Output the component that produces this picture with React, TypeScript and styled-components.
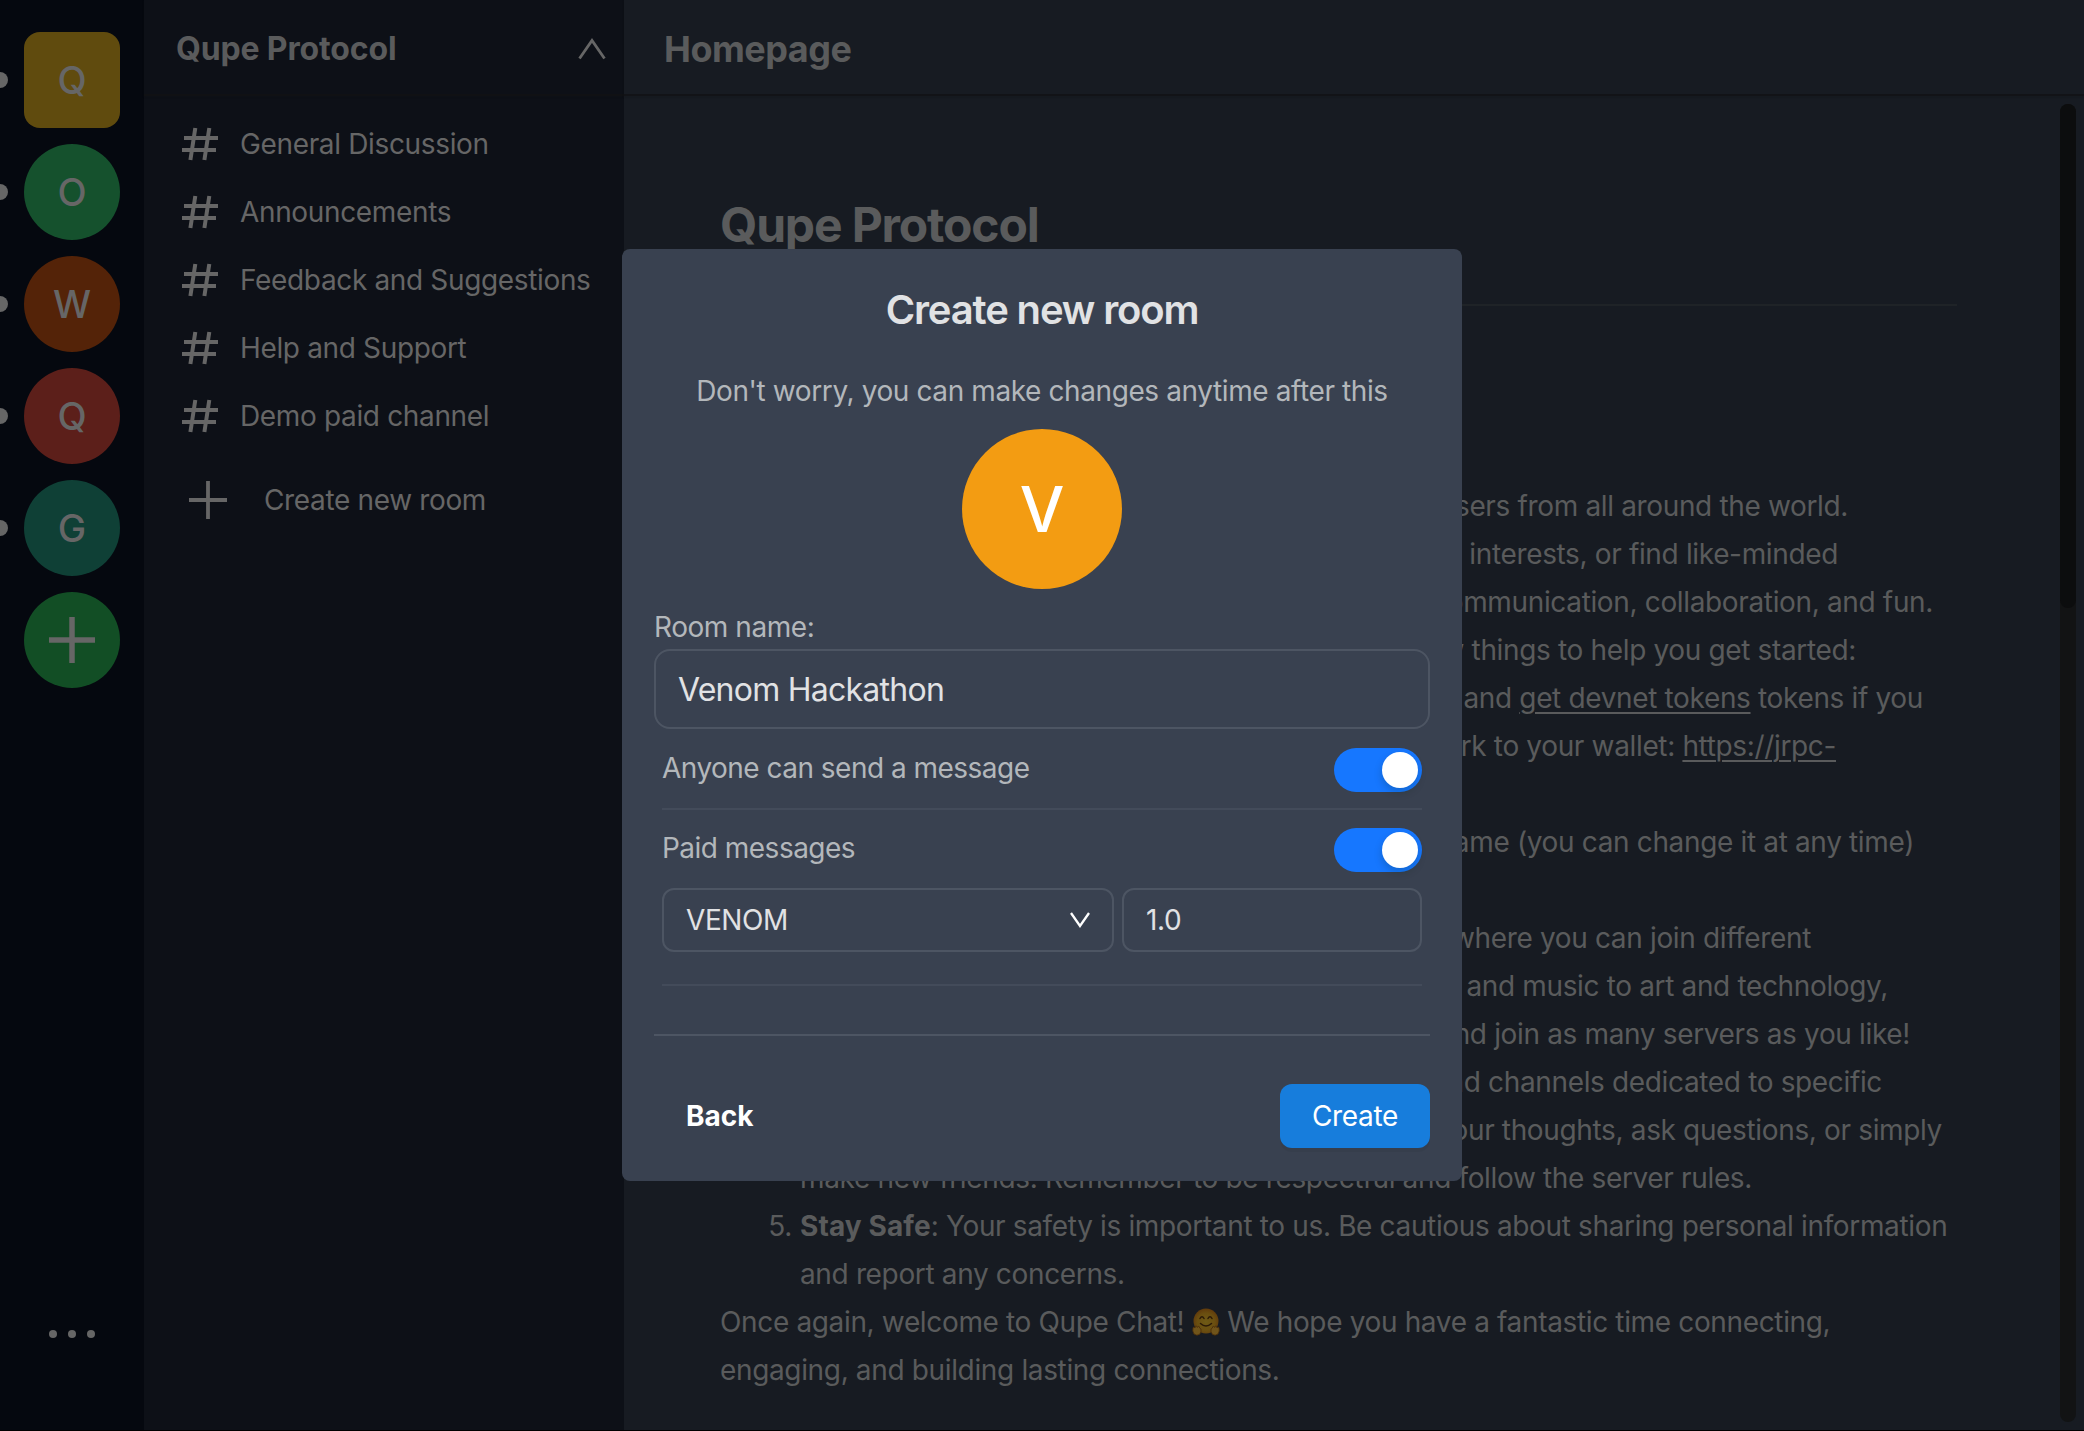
import React from "react";
import styled, { createGlobalStyle } from "styled-components";

const Global = createGlobalStyle`
  *, *::before, *::after { box-sizing: border-box; }
  body { margin: 0; background: #171b22; font-family: Inter, "Liberation Sans", sans-serif; font-size: 28px; letter-spacing: -0.35px; }
  h1, h2, p, ol { margin: 0; padding: 0; }
  button, input { font-family: inherit; }
`;

const Shell = styled.div`
  display: grid;
  grid-template-columns: 144px 480px 1fr;
  height: 1431px;
  overflow: hidden;
  position: relative;
  border-bottom: 1px solid #000;
`;

const Rail = styled.nav`
  background: #05080f;
  padding: 32px 0 92px;
  display: flex;
  flex-direction: column;
  gap: 16px;
`;

const ServerRow = styled.div`
  display: flex;
  align-items: center;
  height: 96px;
`;

const Unread = styled.span<{ $shown: boolean }>`
  width: 8px;
  height: 16px;
  margin-right: 16px;
  border-radius: 0 8px 8px 0;
  background: ${(p) => (p.$shown ? "#666666" : "transparent")};
`;

const Avatar = styled.div<{ $bg: string; $square?: boolean }>`
  width: 96px;
  height: 96px;
  border-radius: ${(p) => (p.$square ? "16px" : "50%")};
  background: ${(p) => p.$bg};
  color: #666666;
  font-size: 38px;
  font-weight: 500;
  letter-spacing: 0;
  display: flex;
  align-items: center;
  justify-content: center;
`;

const Dots = styled.div`
  margin-top: auto;
  display: flex;
  justify-content: center;
  gap: 11px;
  height: 8px;
  span { width: 8px; height: 8px; border-radius: 50%; background: #666; }
`;

const Sidebar = styled.aside`
  background: #0d1017;
`;

const Bar = styled.header<{ $pad: string }>`
  height: 96px;
  padding: ${(p) => p.$pad};
  display: flex;
  align-items: center;
  justify-content: space-between;
  border-bottom: 2px solid rgba(17, 18, 20, 0.75);
  box-shadow: 0 1px 2px rgba(17, 19, 20, 0.3);
`;

const BarTitle = styled.h2<{ $size: number; $track: number }>`
  font-size: ${(p) => p.$size}px;
  letter-spacing: ${(p) => p.$track}px;
  font-weight: 700;
  color: #5a5b5c;
`;

const Rooms = styled.div`
  padding: 14px 0 0 36px;
  color: #666666;
`;

const Room = styled.div`
  height: 68px;
  display: flex;
  align-items: center;
  gap: 20px;
  white-space: nowrap;
`;

const NewRoom = styled(Room)`
  margin-top: 16px;
  padding-left: 9px;
  gap: 37px;
`;

const Main = styled.main`
  background: #171b22;
  min-width: 0;
  display: flex;
  flex-direction: column;
`;

const Scroll = styled.div`
  flex: 1;
  min-height: 0;
  display: flex;
  padding: 8px 8px 8px 96px;
`;

const Article = styled.article`
  width: 1237px;
  color: #5a5b5c;
  line-height: 48px;
  white-space: nowrap;
`;

const ArticleTitle = styled.h1`
  margin-top: 89px;
  height: 64px;
  line-height: 64px;
  font-size: 48px;
  font-weight: 700;
  letter-spacing: -1.15px;
`;

const Rule = styled.hr`
  margin: 47px 0 0;
  border: 0;
  height: 2px;
  background: #1f2327;
`;

const Intro = styled.div`
  margin-top: 176px;
`;

const Line = styled.div<{ $end: number }>`
  height: 48px;
  width: ${(p) => p.$end}px;
  display: flex;
  justify-content: flex-end;
  white-space: pre;
`;

const Link = styled.a`
  color: inherit;
  text-decoration: underline;
  text-underline-offset: 4px;
  text-decoration-thickness: 2px;
`;

const Steps = styled.ol`
  padding-left: 80px;
  list-style: none;
`;

const Step = styled.li`
  position: relative;
`;

const Marker = styled.span`
  position: absolute;
  right: calc(100% + 8px);
  top: 0;
`;

const Text = styled.div`
  height: 48px;
  white-space: pre;
`;

const Strong = styled.b`
  letter-spacing: 0.1px;
`;

const Emoji = styled.svg`
  width: 28px;
  height: 28px;
  vertical-align: -4px;
`;

const Track = styled.div`
  margin-left: auto;
  width: 16px;
  border-radius: 8px;
  background: #121314;
`;

const Thumb = styled.div`
  height: 504px;
  border-radius: 8px;
  background: #0c0d0e;
`;

const Dialog = styled.section`
  position: absolute;
  left: 622px;
  top: 249px;
  width: 840px;
  height: 932px;
  border-radius: 8px;
  background: #394150;
  padding: 0 32px;
  display: flex;
  flex-direction: column;
`;

const DialogTitle = styled.h2`
  margin-top: 35px;
  line-height: 52px;
  text-align: center;
  font-size: 40px;
  font-weight: 600;
  letter-spacing: -1.15px;
  color: #e1e2e4;
`;

const Hint = styled.p`
  margin-top: 33px;
  line-height: 44px;
  text-align: center;
  letter-spacing: -0.4px;
  color: #b3b7bb;
`;

const Picture = styled.div`
  margin: 16px auto 0;
  width: 160px;
  height: 160px;
  border-radius: 50%;
  background: #f39c12;
  color: #fff;
  font-size: 63px;
  font-weight: 500;
  letter-spacing: 0;
  display: flex;
  align-items: center;
  justify-content: center;
`;

const Label = styled.label`
  margin-top: 16px;
  line-height: 44px;
  letter-spacing: -0.45px;
  color: #b3b7bb;
`;

const Field = styled.div<{ $w?: number; $large?: boolean }>`
  width: ${(p) => (p.$w ? p.$w + "px" : "100%")};
  height: ${(p) => (p.$large ? 80 : 64)}px;
  padding: 0 22px;
  border: 2px solid #4d5563;
  border-radius: ${(p) => (p.$large ? 16 : 12)}px;
  font-size: ${(p) => (p.$large ? 32 : 28)}px;
  letter-spacing: ${(p) => (p.$large ? -0.75 : -0.4)}px;
  color: #e1e2e4;
  display: flex;
  align-items: center;
  justify-content: space-between;
`;

const Settings = styled.div`
  padding: 0 8px;
`;

const Setting = styled.div<{ $first?: boolean }>`
  height: ${(p) => (p.$first ? 79 : 78)}px;
  padding-top: ${(p) => (p.$first ? 19 : 18)}px;
  display: flex;
  align-items: flex-start;
  justify-content: space-between;
`;

const SettingName = styled.span`
  margin-top: -2px;
  line-height: 44px;
  letter-spacing: -0.52px;
  color: #b3b7bb;
`;

const Switch = styled.span`
  width: 88px;
  height: 44px;
  padding: 4px;
  border-radius: 22px;
  background: #1677ff;
  display: flex;
  justify-content: flex-end;
`;

const Knob = styled.span`
  width: 36px;
  height: 36px;
  border-radius: 50%;
  background: #fff;
  box-shadow: 0 4px 8px rgba(0, 35, 11, 0.2);
`;

const Divider = styled.div`
  height: 2px;
  background: #434b5a;
`;

const FooterDivider = styled(Divider)`
  margin-top: 48px;
  background: #4d5563;
`;

const Price = styled.div`
  display: flex;
  gap: 8px;
  margin-bottom: 32px;
`;

const Footer = styled.footer`
  margin-top: 48px;
  display: flex;
  align-items: center;
  justify-content: space-between;
`;

const Action = styled.button<{ $primary?: boolean }>`
  height: 64px;
  width: ${(p) => (p.$primary ? "150px" : "auto")};
  padding: 0 ${(p) => (p.$primary ? 0 : 32)}px;
  border: 0;
  border-radius: 12px;
  font-size: 28px;
  font-weight: ${(p) => (p.$primary ? 400 : 700)};
  letter-spacing: ${(p) => (p.$primary ? -0.35 : 0)}px;
  color: #fff;
  background: ${(p) => (p.$primary ? "#177ddc" : "transparent")};
  box-shadow: ${(p) => (p.$primary ? "0 4px 0 rgba(0, 0, 0, 0.045)" : "none")};
`;

const HashIcon = () => (
  <svg width="40" height="40" viewBox="0 0 40 40" fill="none" stroke="#666" strokeWidth="4">
    <path d="M15.3 4 10.4 36M29.3 4 24.4 36M4 14H38M2 26H36" />
  </svg>
);

const PlusIcon = ({ size, weight }: { size: number; weight: number }) => (
  <svg width={size} height={size} viewBox={`0 0 ${size} ${size}`} stroke="#666" strokeWidth={weight}>
    <path d={`M${size / 2} 0V${size}M0 ${size / 2}H${size}`} />
  </svg>
);

const HugEmoji = () => (
  <Emoji viewBox="0 0 28 28">
    <defs>
      <radialGradient id="hug-face" cx="50%" cy="55%" r="55%">
        <stop offset="0" stopColor="#6e5a16" />
        <stop offset="0.65" stopColor="#6a4e10" />
        <stop offset="1" stopColor="#613a0b" />
      </radialGradient>
    </defs>
    <circle cx="14" cy="13" r="12.5" fill="url(#hug-face)" />
    <path d="M8 10.5q2-3.5 4 0M16 10.5q2-3.5 4 0M8.500 15.500q5.500 5 11 0" fill="none" stroke="#2b1a08" strokeWidth="1.500" strokeLinecap="round" />
    <path
      d="M1 19.500q1-1 2 .5l.5-2q1.500-.5 1.800 1.500l1-1.200q1.400 0 1.300 1.700l1.400 1q.6 3-1.500 5.500-3 1.500-5.500-.5-2-3-1-6.500zM27 19.500q-1-1-2 .5l-.5-2q-1.500-.5-1.800 1.500l-1-1.200q-1.400 0-1.300 1.700l-1.400 1q-.6 3 1.500 5.500 3 1.500 5.500-.5 2-3 1-6.500z"
      fill="#70541a"
      stroke="#4a2d0a"
      strokeWidth="0.800"
    />
  </Emoji>
);

const servers = [
  { letter: "Q", color: "#604b0e" },
  { letter: "O", color: "#15512d" },
  { letter: "W", color: "#542308" },
  { letter: "Q", color: "#5c1f1a" },
  { letter: "G", color: "#0f4036" },
];

const rooms = [
  "General Discussion",
  "Announcements",
  "Feedback and Suggestions",
  "Help and Support",
  "Demo paid channel",
];

export default function App() {
  return (
    <Shell>
      <Global />
      <Rail>
        {servers.map((s, i) => (
          <ServerRow key={i}>
            <Unread $shown />
            <Avatar $bg={s.color} $square={i === 0}>{s.letter}</Avatar>
          </ServerRow>
        ))}
        <ServerRow>
          <Unread $shown={false} />
          <Avatar $bg="#124e25"><PlusIcon size={46} weight={5.5} /></Avatar>
        </ServerRow>
        <Dots><span /><span /><span /></Dots>
      </Rail>

      <Sidebar>
        <Bar $pad="3px 18px 0 32px">
          <BarTitle $size={32} $track={-0.15}>Qupe Protocol</BarTitle>
          <svg width="28" height="22" viewBox="0 0 28 22" fill="none" stroke="#666" strokeWidth="2.8">
            <path d="M1.5 20.5 14 2.5 26.5 20.5" />
          </svg>
        </Bar>
        <Rooms>
          {rooms.map((r) => (
            <Room key={r}><HashIcon />{r}</Room>
          ))}
          <NewRoom><PlusIcon size={38} weight={3.8} />Create new room</NewRoom>
        </Rooms>
      </Sidebar>

      <Main>
        <Bar $pad="3px 40px 0">
          <BarTitle $size={36} $track={-0.5}>Homepage</BarTitle>
        </Bar>
        <Scroll>
          <Article>
            <ArticleTitle>Qupe Protocol</ArticleTitle>
            <Rule />
            <Intro>
              <Line $end={1128}>We are glad to welcome users from all around the world.</Line>
              <Line $end={1118}>Share your interests, or find like-minded</Line>
              <Line $end={1213}>A place for communication, collaboration, and fun.</Line>
              <Line $end={1136}>Here are a few things to help you get started:</Line>
            </Intro>
            <Steps>
              <Line $end={1123}>Install the wallet and <Link>get devnet tokens</Link> tokens if you</Line>
              <Line $end={1036}>Add the devnet network to your wallet: <Link>https://jrpc-</Link></Line>
              <Text />
              <Line $end={1114}>Choose a username (you can change it at any time)</Line>
              <Text />
              <Line $end={1011}>Explore the servers where you can join different</Line>
              <Line $end={1088}>topics, from games and music to art and technology,</Line>
              <Line $end={1110}>Look around and join as many servers as you like!</Line>
              <Line $end={1082}>Servers have rooms and channels dedicated to specific</Line>
              <Line $end={1142}>Share your thoughts, ask questions, or simply</Line>
              <Text>make new friends. Remember to be respectful and follow the server rules.</Text>
              <Step>
                <Marker>5.</Marker>
                <Text><Strong>Stay Safe</Strong>: Your safety is important to us. Be cautious about sharing personal information</Text>
                <Text>and report any concerns.</Text>
              </Step>
            </Steps>
            <Text>Once again, welcome to Qupe Chat! <HugEmoji /> We hope you have a fantastic time connecting,</Text>
            <Text>engaging, and building lasting connections.</Text>
          </Article>
          <Track><Thumb /></Track>
        </Scroll>
      </Main>

      <Dialog>
        <DialogTitle>Create new room</DialogTitle>
        <Hint>Don't worry, you can make changes anytime after this</Hint>
        <Picture>V</Picture>
        <Label>Room name:</Label>
        <Field $large>Venom Hackathon</Field>
        <Settings>
          <Setting $first>
            <SettingName>Anyone can send a message</SettingName>
            <Switch><Knob /></Switch>
          </Setting>
          <Divider />
          <Setting>
            <SettingName>Paid messages</SettingName>
            <Switch><Knob /></Switch>
          </Setting>
          <Price>
            <Field $w={452}>
              VENOM
              <svg width="20" height="16" viewBox="0 0 20 16" fill="none" stroke="#fff" strokeWidth="2.3">
                <path d="M1 1 10 14 19 1" />
              </svg>
            </Field>
            <Field $w={300}>1.0</Field>
          </Price>
          <Divider />
        </Settings>
        <FooterDivider />
        <Footer>
          <Action>Back</Action>
          <Action $primary>Create</Action>
        </Footer>
      </Dialog>
    </Shell>
  );
}
